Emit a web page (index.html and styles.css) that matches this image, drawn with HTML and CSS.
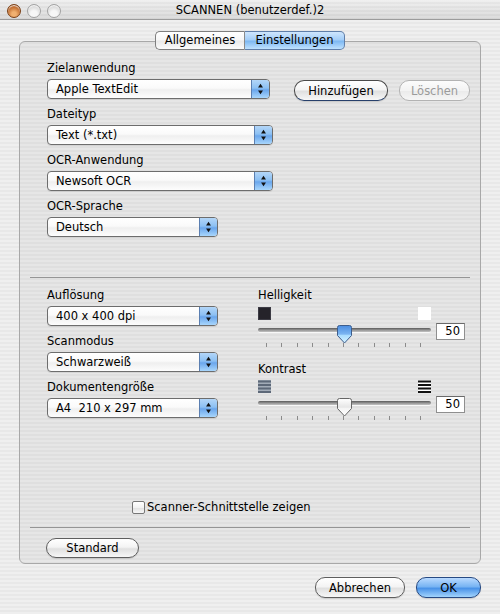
FILE: index.html
```html
<!DOCTYPE html>
<html>
<head>
<meta charset="utf-8">
<link rel="stylesheet" href="styles.css">
</head>
<body>
<div class="window">
  <div class="titlebar">
    <div class="lights"><span class="light close"></span><span class="light"></span><span class="light"></span></div>
    <div class="title">SCANNEN (benutzerdef.)2</div>
    <div></div>
  </div>

  <div class="tabs">
    <div class="tab first">Allgemeines</div>
    <div class="tab selected">Einstellungen</div>
  </div>

  <div class="box">
    <div class="section top">
      <div class="field">
        <div class="label">Zielanwendung</div>
        <div class="row">
          <div class="popup wide"><span class="ptext">Apple TextEdit</span><span class="arrows"><svg width="18" height="18" viewBox="0 0 18 18"><path d="M9 3.5 L11.6 7.3 L6.4 7.3 Z" fill="#111"/><path d="M6.4 10.7 L11.6 10.7 L9 14.5 Z" fill="#111"/></svg></span></div>
          <button class="btn add">Hinzufügen</button>
          <button class="btn del" disabled>Löschen</button>
        </div>
      </div>
      <div class="field">
        <div class="label">Dateityp</div>
        <div class="popup wide"><span class="ptext">Text (*.txt)</span><span class="arrows"><svg width="18" height="18" viewBox="0 0 18 18"><path d="M9 3.5 L11.6 7.3 L6.4 7.3 Z" fill="#111"/><path d="M6.4 10.7 L11.6 10.7 L9 14.5 Z" fill="#111"/></svg></span></div>
      </div>
      <div class="field">
        <div class="label">OCR-Anwendung</div>
        <div class="popup wide"><span class="ptext">Newsoft OCR</span><span class="arrows"><svg width="18" height="18" viewBox="0 0 18 18"><path d="M9 3.5 L11.6 7.3 L6.4 7.3 Z" fill="#111"/><path d="M6.4 10.7 L11.6 10.7 L9 14.5 Z" fill="#111"/></svg></span></div>
      </div>
      <div class="field">
        <div class="label">OCR-Sprache</div>
        <div class="popup narrow"><span class="ptext">Deutsch</span><span class="arrows"><svg width="18" height="18" viewBox="0 0 18 18"><path d="M9 3.5 L11.6 7.3 L6.4 7.3 Z" fill="#111"/><path d="M6.4 10.7 L11.6 10.7 L9 14.5 Z" fill="#111"/></svg></span></div>
      </div>
    </div>

    <div class="sep first-sep"></div>

    <div class="section lower">
      <div class="col-left">
        <div class="field">
          <div class="label">Auflösung</div>
          <div class="popup narrow"><span class="ptext">400 x 400 dpi</span><span class="arrows"><svg width="18" height="18" viewBox="0 0 18 18"><path d="M9 3.5 L11.6 7.3 L6.4 7.3 Z" fill="#111"/><path d="M6.4 10.7 L11.6 10.7 L9 14.5 Z" fill="#111"/></svg></span></div>
        </div>
        <div class="field">
          <div class="label">Scanmodus</div>
          <div class="popup narrow"><span class="ptext">Schwarzweiß</span><span class="arrows"><svg width="18" height="18" viewBox="0 0 18 18"><path d="M9 3.5 L11.6 7.3 L6.4 7.3 Z" fill="#111"/><path d="M6.4 10.7 L11.6 10.7 L9 14.5 Z" fill="#111"/></svg></span></div>
        </div>
        <div class="field">
          <div class="label">Dokumentengröße</div>
          <div class="popup narrow"><span class="ptext">A4&nbsp; 210 x 297 mm</span><span class="arrows"><svg width="18" height="18" viewBox="0 0 18 18"><path d="M9 3.5 L11.6 7.3 L6.4 7.3 Z" fill="#111"/><path d="M6.4 10.7 L11.6 10.7 L9 14.5 Z" fill="#111"/></svg></span></div>
        </div>
      </div>

      <div class="col-right">
        <div class="label">Helligkeit</div>
        <div class="slider-icons">
          <span class="sq black"></span>
          <span class="sq white"></span>
        </div>
        <div class="slider-row">
          <div class="track-area">
            <div class="track"></div>
            <div class="ticks"><i></i><i></i><i></i><i></i><i></i><i></i><i></i><i></i><i></i><i></i><i></i></div>
            <svg class="thumb" width="15" height="19" viewBox="0 0 15 19">
              <defs>
                <linearGradient id="gb" x1="0" y1="0" x2="0" y2="1">
                  <stop offset="0" stop-color="#4a8ce0"/>
                  <stop offset="0.5" stop-color="#7db6f2"/>
                  <stop offset="0.55" stop-color="#a9dcff"/>
                  <stop offset="1" stop-color="#d6f2ff"/>
                </linearGradient>
              </defs>
              <path d="M2.5 0.5 H12.5 A2 2 0 0 1 14.5 2.5 V10.5 L7.5 18 L0.5 10.5 V2.5 A2 2 0 0 1 2.5 0.5 Z" fill="url(#gb)" stroke="#3d5d8c" stroke-width="1"/>
            </svg>
          </div>
          <div class="value">50</div>
        </div>

        <div class="label k-label">Kontrast</div>
        <div class="slider-icons k-icons">
          <svg width="13" height="13" viewBox="0 0 13 13">
            <rect x="0" y="0" width="13" height="13" fill="#a3acb8"/>
            <rect x="0" y="0.5" width="13" height="2" fill="#5d6878"/>
            <rect x="0" y="4" width="13" height="2" fill="#5d6878"/>
            <rect x="0" y="7.5" width="13" height="2" fill="#5d6878"/>
            <rect x="0" y="11" width="13" height="2" fill="#5d6878"/>
          </svg>
          <svg width="13" height="13" viewBox="0 0 13 13">
            <rect x="0" y="0" width="13" height="13" fill="#ffffff"/>
            <rect x="0" y="0.5" width="13" height="2" fill="#111"/>
            <rect x="0" y="4" width="13" height="2" fill="#111"/>
            <rect x="0" y="7.5" width="13" height="2" fill="#111"/>
            <rect x="0" y="11" width="13" height="2" fill="#111"/>
          </svg>
        </div>
        <div class="slider-row">
          <div class="track-area">
            <div class="track"></div>
            <div class="ticks"><i></i><i></i><i></i><i></i><i></i><i></i><i></i><i></i><i></i><i></i><i></i></div>
            <svg class="thumb" width="15" height="19" viewBox="0 0 15 19">
              <defs>
                <linearGradient id="gw" x1="0" y1="0" x2="0" y2="1">
                  <stop offset="0" stop-color="#ffffff"/>
                  <stop offset="0.5" stop-color="#e6e6e6"/>
                  <stop offset="0.55" stop-color="#f4f4f4"/>
                  <stop offset="1" stop-color="#ffffff"/>
                </linearGradient>
              </defs>
              <path d="M2.5 0.5 H12.5 A2 2 0 0 1 14.5 2.5 V10.5 L7.5 18 L0.5 10.5 V2.5 A2 2 0 0 1 2.5 0.5 Z" fill="url(#gw)" stroke="#666" stroke-width="1"/>
            </svg>
          </div>
          <div class="value">50</div>
        </div>
      </div>
    </div>

    <div class="check-row"><span class="checkbox"></span><span>Scanner-Schnittstelle zeigen</span></div>

    <div class="sep second-sep"></div>

    <div class="std-row"><button class="btn std">Standard</button></div>
  </div>

  <div class="footer">
    <button class="btn cancel">Abbrechen</button>
    <button class="btn ok">OK</button>
  </div>
</div>
</body>
</html>
```

FILE: styles.css
```css
* { box-sizing: border-box; }
html, body { margin: 0; padding: 0; }
body {
  width: 500px;
  height: 614px;
  overflow: hidden;
  font-family: "DejaVu Sans", "Liberation Sans", sans-serif;
  font-size: 11.5px;
  color: #000;
}
.window {
  width: 500px;
  height: 614px;
  background: repeating-linear-gradient(to bottom, #efefef 0 2px, #e8e8e8 2px 4px);
}

/* title bar */
.titlebar {
  height: 20px;
  border-bottom: 1px solid #9c9c9c;
  display: grid;
  grid-template-columns: 1fr auto 1fr;
  align-items: center;
  background:
    linear-gradient(rgba(255,255,255,0.2), rgba(0,0,0,0.07)),
    repeating-linear-gradient(to bottom, #ececec 0 2px, #e3e3e3 2px 4px);
}
.lights { display: flex; gap: 6px; padding-left: 7px; padding-top: 1px; }
.light {
  width: 14px; height: 14px; border-radius: 50%;
  border: 1px solid #a2a2a2;
  background: radial-gradient(circle at 50% 75%, #f7f7f7 0 30%, #d8d8d8 70%, #c4c4c4 100%);
  box-shadow: inset 0 1px 1px rgba(255,255,255,0.9);
}
.light.close {
  border-color: #7a3f15;
  background: radial-gradient(circle at 50% 75%, #f0b070 0 20%, #c06a2c 65%, #8c4a1c 100%);
}
.title { line-height: 19px; padding-top: 1px; white-space: nowrap; }

/* tabs */
.tabs {
  display: flex;
  justify-content: center;
  margin-top: 11px;
  margin-bottom: -9px;
  position: relative;
  z-index: 1;
}
.tab {
  height: 19px;
  line-height: 17px;
  border: 1px solid #7e7e7e;
  text-align: center;
  background: linear-gradient(#ffffff, #f6f6f6 48%, #e9e9e9 52%, #fbfbfb);
}
.tab.first { width: 90px; border-radius: 5px 0 0 5px; border-right-color: #8a8a8a; }
.tab.selected {
  width: 100px;
  border-left: none;
  border-radius: 0 5px 5px 0;
  border-color: #5f7ea9;
  background: linear-gradient(#cfe6fd, #a4cef8 45%, #7fb9f2 55%, #bfe2ff);
}

/* group box */
.box {
  margin: 0 19px;
  border: 1px solid #a8a8a8;
  border-radius: 6px;
  padding: 0 10px 5px;
  background: rgba(0,0,0,0.035);
}
.section { padding-left: 17px; }
.section.top { padding-top: 19px; }
.field { margin-bottom: 8px; }
.field:last-child { margin-bottom: 0; }
.label { line-height: 15px; margin-bottom: 3px; white-space: nowrap; }
.row { display: flex; align-items: flex-start; height: 20px; }

/* popups */
.popup {
  display: flex;
  height: 20px;
  border: 1px solid #6d6d6d;
  border-radius: 4px;
  overflow: hidden;
  background: linear-gradient(#ffffff, #fafafa 45%, #efefef 55%, #fdfdfd);
  box-shadow: 0 1px 0 rgba(0,0,0,0.08);
}
.popup.wide { width: 226px; }
.popup.narrow { width: 171px; }
.ptext { flex: 1; line-height: 18px; padding-left: 8px; white-space: nowrap; }
.arrows {
  width: 18px;
  height: 18px;
  border-left: 1px solid #5b7fb1;
  background: linear-gradient(#b3d6f8, #8cc0f3 45%, #6aa6ec 55%, #a8d6fc);
  display: flex;
}

/* buttons */
.btn {
  font: inherit;
  color: #000;
  padding: 0;
  margin: 0;
  height: 20px;
  line-height: 18px;
  border: 1px solid #5e5e5e;
  border-radius: 10px;
  background: linear-gradient(#ffffff, #f4f4f4 45%, #e0e0e0 55%, #f7f7f7);
  box-shadow: 0 1px 1px rgba(0,0,0,0.12);
  text-align: center;
  -webkit-appearance: none;
  appearance: none;
  flex: none;
}
.btn.add { width: 94px; height: 21px; margin-top: 1px; margin-left: 24px; border-color: #4a4a4a; border-bottom-color: #27406b; }
.btn.del {
  width: 71px; height: 21px; margin-top: 1px; margin-left: 11px;
  border-color: #b3b3b3; color: #9b9b9b;
  background: linear-gradient(#fcfcfc, #f3f3f3 50%, #ebebeb 55%, #f6f6f6);
  box-shadow: none;
}

/* separators */
.sep { height: 1px; background: #959595; }
.first-sep { margin-top: 40px; }
.second-sep { margin-top: 12px; }

/* lower section */
.section.lower {
  margin-top: 10px;
  display: grid;
  grid-template-columns: 171px 207px;
  column-gap: 40px;
  align-items: start;
}
.slider-icons {
  width: 173px;
  height: 13px;
  margin-top: 4px;
  display: flex;
  justify-content: space-between;
}
.k-icons { margin-top: 3px; }
.k-label { margin-top: 14px; margin-bottom: 0; }
.sq { width: 13px; height: 13px; }
.sq.black { background: #25232a; border: 1px solid #3c3b44; }
.sq.white { background: #ffffff; }
.slider-row { display: flex; gap: 5px; height: 28px; }
.track-area { width: 173px; position: relative; }
.track {
  margin-top: 8px;
  height: 4px;
  border-radius: 2px;
  background: linear-gradient(#5a5a5a, #9e9e9e 60%, #c4c4c4);
  box-shadow: 0 1px 0 rgba(255,255,255,0.7);
}
.ticks {
  margin-top: 11px;
  height: 4px;
  display: flex;
  justify-content: space-between;
  padding: 0 10px 0 8px;
}
.ticks i { display: block; width: 1px; height: 4px; background: #8b8b8b; }
.thumb { position: absolute; left: 79px; top: 5px; }
.value {
  width: 29px;
  height: 17px;
  margin-top: 3px;
  border: 1px solid #8f8f8f;
  border-top-color: #6a6a6a;
  background: #ffffff;
  line-height: 15px;
  text-align: right;
  padding-right: 4px;
}

/* checkbox */
.check-row {
  margin-top: 79px;
  margin-left: 102px;
  display: flex;
  align-items: center;
  gap: 2px;
  line-height: 15px;
  white-space: nowrap;
}
.checkbox {
  width: 13px; height: 13px;
  border: 1px solid #777;
  border-radius: 2px;
  background: linear-gradient(#ffffff, #f2f2f2 50%, #e2e2e2 55%, #f7f7f7);
}

.std-row { margin-top: 10px; padding-left: 16px; }
.btn.std { width: 93px; }

/* footer */
.footer {
  margin-top: 13px;
  display: flex;
  justify-content: flex-end;
  gap: 11px;
  padding-right: 19px;
}
.btn.cancel { width: 90px; height: 21px; }
.btn.ok {
  width: 65px; height: 21px;
  border-color: #274a83;
  background: linear-gradient(#b9daff, #78b4f3 45%, #4a93e8 55%, #a2d4fd);
}
```
